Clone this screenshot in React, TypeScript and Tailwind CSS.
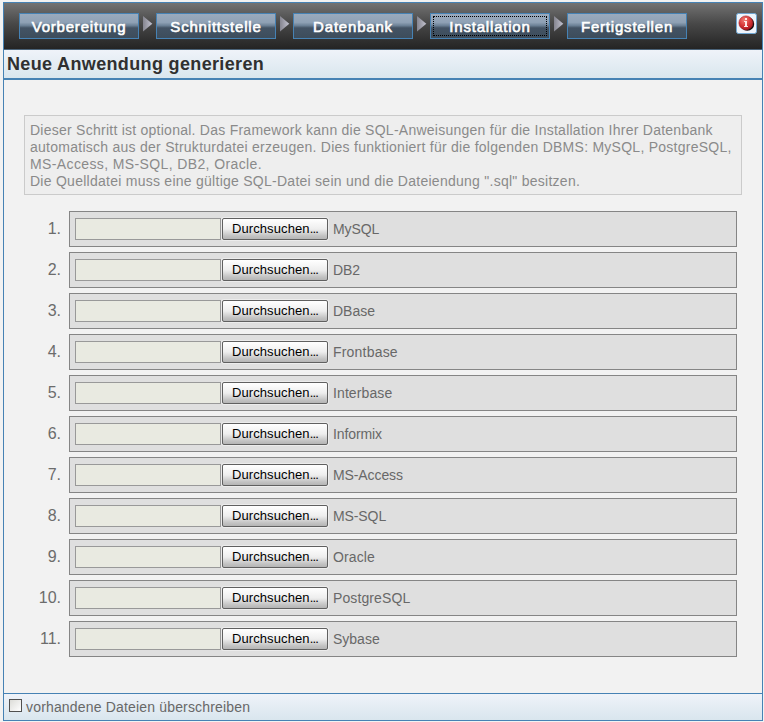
const steps = [
  { name: "Vorbereitung", track: "tracking-[0.8px]" },
  { name: "Schnittstelle", track: "tracking-[0.8px]" },
  { name: "Datenbank", track: "tracking-[0.8px]" },
  { name: "Installation", track: "tracking-[0.8px]" },
  { name: "Fertigstellen", track: "tracking-[0.8px]" },
];

const systems = [
  { name: "MySQL", track: "tracking-[-0.1px]" },
  { name: "DB2", track: "tracking-[-0.1px]" },
  { name: "DBase", track: "tracking-normal" },
  { name: "Frontbase", track: "tracking-[0.2px]" },
  { name: "Interbase", track: "tracking-[0.1px]" },
  { name: "Informix", track: "tracking-[-0.1px]" },
  { name: "MS-Access", track: "tracking-[-0.1px]" },
  { name: "MS-SQL", track: "tracking-[-0.1px]" },
  { name: "Oracle", track: "tracking-[0.1px]" },
  { name: "PostgreSQL", track: "tracking-[0.1px]" },
  { name: "Sybase", track: "tracking-normal" },
];

function Arrow() {
  return (
    <svg className="mt-[3px] ml-1 h-4 w-[13px] shrink-0" viewBox="0 0 13 16">
      <defs>
        <linearGradient id="arrow" x1="0" x2="1">
          <stop offset="0" stopColor="#858590" />
          <stop offset="1" stopColor="#c3c3d0" />
        </linearGradient>
      </defs>
      <path d="M0 0 L9.3 7.7 L0 15.4Z" fill="url(#arrow)" />
    </svg>
  );
}

function InfoIcon() {
  return (
    <svg className="h-[21px] w-[21px]" viewBox="0 0 21 21">
      <defs>
        <radialGradient id="ball" cx=".4" cy=".3" r=".7">
          <stop offset="0" stopColor="#f08078" />
          <stop offset=".55" stopColor="#d93b3b" />
          <stop offset="1" stopColor="#b01820" />
        </radialGradient>
      </defs>
      <rect x=".5" y=".5" width="20" height="20" rx="2" fill="#eef4fb" stroke="#6ea6d2" />
      <circle cx="11.3" cy="10.9" r="6.9" fill="#15080a" />
      <circle cx="9.9" cy="9.9" r="7" fill="url(#ball)" stroke="#a52026" strokeWidth=".6" />
      <path d="M9 5h2v2H9zM8 8h3v5h1v1H8v-1h1V9H8z" fill="#ffe9e6" />
    </svg>
  );
}

export default function App() {
  return (
    <div className="h-[722px] w-[764px] overflow-hidden bg-[#f2f2f2] pt-[2px] pl-[3px] font-['Liberation_Sans',Arial,sans-serif]">
      <div className="flex h-[719px] w-[760px] flex-col border border-[#4682b4]">
        <header className="flex h-[47px] shrink-0 items-start border-b border-[#4b6379] bg-linear-to-b from-[#737373] via-[#484848] via-45% to-[#242424] pt-[10px] pl-[15px]">
          {steps.map((s, i) => (
            <div key={s.name} className="flex">
              <div className="relative flex h-[26px] w-[120px] items-center justify-center border border-[#4682b4] bg-[linear-gradient(#9aaabd_0%,#8fa1b5_35%,#6c8196_48%,#435364_58%,#3d4d5c_100%)]">
                {s.name === "Installation" && (
                  <div className="absolute inset-[2px] border border-dotted border-black" />
                )}
                <span className={`relative top-px text-[15px] leading-[18px] whitespace-nowrap text-white [-webkit-text-stroke:0.6px_white] ${s.track}`}>{s.name}</span>
              </div>
              {i < 4 && <Arrow />}
            </div>
          ))}
          <div className="mr-[5px] ml-auto"><InfoIcon /></div>
        </header>
        <h1 className="flex h-[30px] shrink-0 items-center border-b-2 border-[#4682b4] bg-linear-to-b from-[#eff3f9] to-[#d9e6ee] pl-[3px]">
          <span className="text-[18px] leading-[20px] font-bold tracking-[0.35px] text-[#303030]">Neue Anwendung generieren</span>
        </h1>
        <main className="grow pt-[35px] pl-5">
          <div className="h-[80px] w-[718px] border border-[#cbcbcb] bg-[#eeeeee] pt-[6px] pl-[5px] text-[14px] leading-[17px] whitespace-nowrap text-[#8a8a8a]">
            <p className="tracking-[0.25px]">Dieser Schritt ist optional. Das Framework kann die SQL-Anweisungen für die Installation Ihrer Datenbank</p>
            <p className="tracking-[0.26px]">automatisch aus der Strukturdatei erzeugen. Dies funktioniert für die folgenden DBMS: MySQL, PostgreSQL,</p>
            <p className="tracking-[0.38px]">MS-Access, MS-SQL, DB2, Oracle.</p>
            <p className="tracking-[0.26px]">Die Quelldatei muss eine gültige SQL-Datei sein und die Dateiendung ".sql" besitzen.</p>
          </div>
          <ol className="mt-4 flex flex-col gap-[5px]">
            {systems.map((s, i) => (
              <li key={s.name} className="flex h-[36px] items-center">
                <span className="w-[37px] text-right text-[16px] text-[#6c6c6c]">{i + 1}.</span>
                <div className="ml-2 flex h-[36px] w-[668px] items-center border border-[#858585] bg-[#dfdfdf] pl-[5px]">
                  <div className="h-[22px] w-[146px] border border-[#999999] bg-[#e9eae1]" />
                  <button className="ml-px flex h-[22px] w-[106px] items-center justify-center rounded-[2px] border border-[#606060] bg-[linear-gradient(#ffffff_0%,#eeeeee_50%,#c2c2c2_85%,#b5b5b5_100%)] text-[13px] leading-4 text-black shadow-[0_0_0_1px_#ececec]">
                    <span className="tracking-[0.1px]">Durchsuchen</span>
                    <span className="tracking-[-0.8px]">...</span>
                  </button>
                  <span className={`ml-[5px] text-[14px] leading-4 text-[#686868] ${s.track}`}>{s.name}</span>
                </div>
              </li>
            ))}
          </ol>
        </main>
        <footer className="flex h-[27px] shrink-0 items-start border-t border-[#4682b4] bg-linear-to-b from-[#eff3f9] to-[#d9e6ee] pl-[5px]">
          <span className="mt-[5px] h-[13px] w-[13px] border border-[#505050] bg-linear-to-br from-[#dcdcd8] to-white" />
          <span className="mt-[5px] ml-1 text-[14px] leading-4 tracking-[0.17px] text-[#686868]">vorhandene Dateien überschreiben</span>
        </footer>
      </div>
    </div>
  );
}
